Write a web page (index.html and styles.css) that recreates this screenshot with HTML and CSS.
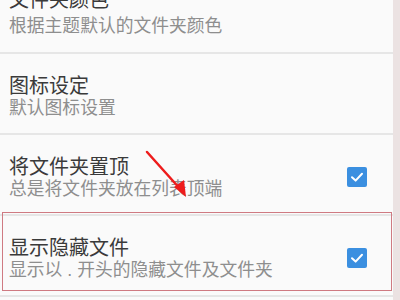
FILE: index.html
```html
<!DOCTYPE html>
<html>
<head>
<meta charset="utf-8">
<link rel="stylesheet" href="styles.css">
</head>
<body>
<div class="screen">
  <div class="list">
    <div class="row row-first">
      <div class="texts">
        <div class="title">文件夹颜色</div>
        <div class="sub">根据主题默认的文件夹颜色</div>
      </div>
    </div>
    <div class="row">
      <div class="texts">
        <div class="title">图标设定</div>
        <div class="sub">默认图标设置</div>
      </div>
    </div>
    <div class="row">
      <div class="texts">
        <div class="title">将文件夹置顶</div>
        <div class="sub">总是将文件夹放在列表顶端</div>
      </div>
      <div class="check"><svg viewBox="0 0 20 20" width="20" height="20"><path d="M5 10.2 L8.6 13.6 L15 6.8" fill="none" stroke="#fff" stroke-width="2" stroke-linecap="round" stroke-linejoin="round"/></svg></div>
    </div>
    <div class="row">
      <div class="texts">
        <div class="title">显示隐藏文件</div>
        <div class="sub">显示以 . 开头的隐藏文件及文件夹</div>
      </div>
      <div class="check"><svg viewBox="0 0 20 20" width="20" height="20"><path d="M5 10.2 L8.6 13.6 L15 6.8" fill="none" stroke="#fff" stroke-width="2" stroke-linecap="round" stroke-linejoin="round"/></svg></div>
    </div>
  </div>
  <div class="strip"></div>
  <div class="highlight"></div>
  <svg class="arrow" width="400" height="300" viewBox="0 0 400 300">
    <line x1="147" y1="152" x2="182" y2="191" stroke="#ee1c1c" stroke-width="2.5" stroke-linecap="round"/>
    <polygon points="186,197 174,187 184,180" fill="#ee1c1c"/>
  </svg>
</div>
</body>
</html>
```

FILE: styles.css
```css
html, body {
  margin: 0;
  padding: 0;
  background: #fafafa;
}
.screen {
  position: relative;
  width: 400px;
  height: 300px;
  overflow: hidden;
  display: flex;
  font-family: "Liberation Sans", "Noto Sans CJK SC", sans-serif;
}
.list {
  width: 393px;
  margin-top: -27px;
  display: flex;
  flex-direction: column;
}
.row {
  display: flex;
  align-items: center;
  padding: 20px 26px 15px 9px;
  border-bottom: 2px solid #e6e6e6;
  flex-shrink: 0;
}
.texts {
  flex: 1;
}
.title {
  font-size: 20px;
  line-height: 24px;
  color: #3a3a3a;
}
.sub {
  font-size: 17.8px;
  line-height: 20px;
  color: #8e8e8e;
  white-space: nowrap;
}
.row-first .sub {
  margin-top: 4px;
}
.row-first {
  padding-top: 15px;
  padding-bottom: 16px;
}
.check {
  width: 20px;
  height: 20px;
  border-radius: 2px;
  background: #3b8fe0;
  display: flex;
}
.strip {
  width: 7px;
  background: #ebe2e2;
}
.highlight {
  position: absolute;
  left: 2px;
  top: 212px;
  width: 388px;
  height: 77px;
  border: 1.5px solid #cf7a82;
}
.arrow {
  position: absolute;
  left: 0;
  top: 0;
}
```
